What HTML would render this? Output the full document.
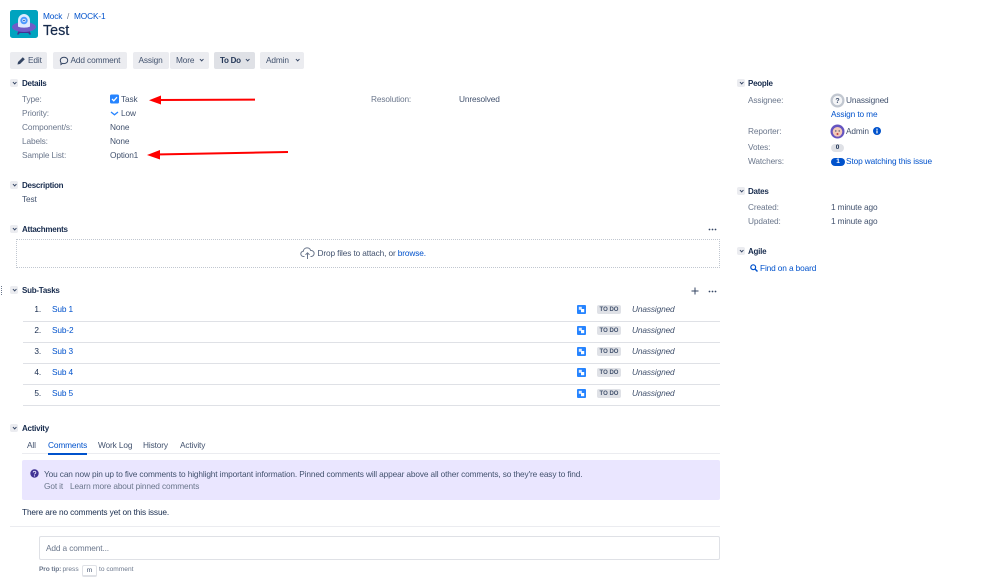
<!DOCTYPE html>
<html><head><meta charset="utf-8">
<style>
html,body{margin:0;padding:0;background:#fff;}
body{width:999px;height:587px;position:relative;overflow:hidden;font-family:"Liberation Sans",sans-serif;font-size:8.3px;letter-spacing:-.127px;color:#42526e;filter:blur(.25px);}
.t{position:absolute;line-height:14px;height:14px;white-space:nowrap;}
.l{color:#6b778c;}
.a{color:#0052cc;}
.h{color:#172b4d;font-weight:bold;font-size:8px;letter-spacing:-.25px;margin-top:1px;}
.v{color:#172b4d;}
.b{position:absolute;top:52px;height:17px;line-height:17px;background:#ebecf0;border-radius:2px;color:#42526e;white-space:nowrap;box-sizing:border-box;}
.c{position:absolute;width:8px;height:8px;background:#ebecf0;border-radius:2px;}
.c:after,.dn:after{content:"";position:absolute;left:2.6px;top:1.5px;width:2.4px;height:2.4px;border-right:1.1px solid #344563;border-bottom:1.1px solid #344563;transform:rotate(45deg);}
.dn{position:absolute;width:8px;height:8px;top:4px;}
.r{position:absolute;left:23px;width:697px;height:1px;background:#dfe1e6;}
.n{position:absolute;width:10px;text-align:right;left:31px;line-height:14px;color:#172b4d;}
.z{position:absolute;left:597px;width:24px;height:9px;background:#dfe1e6;border-radius:2px;color:#42526e;font-size:6px;letter-spacing:0;font-weight:bold;line-height:10px;text-align:center;}
.i{position:absolute;left:632px;line-height:14px;font-style:italic;color:#42526e;white-space:nowrap;}
svg{position:absolute;}
.p{font-size:6.6px;letter-spacing:0;}
</style></head><body>

<svg style="left:10px;top:10px" width="28" height="28" viewBox="0 0 28 28">
<rect width="28" height="28" rx="2.500" fill="#00a3bf"/>
<rect x="8" y="21" width="12" height="2" fill="#403294"/>
<path d="M8.500 20.500l-1.500 4h2l1.500-4zM19.500 20.500l1.500 4h-2l-1.500-4z" fill="#403294"/>
<ellipse cx="14" cy="17" rx="12" ry="5" fill="#6f5cc8"/>
<path d="M8 16.500V10.500a6 6.500 0 0 1 12 0v6c-2 1.500-10 1.500-12 0z" fill="#deebff"/>
<circle cx="14" cy="10.500" r="3.700" fill="#4c9aff"/><circle cx="14" cy="10.500" r="1.700" fill="#deebff"/><circle cx="14" cy="10.500" r=".8" fill="#0747a6"/>
</svg>
<span class="t a" style="left:43px;top:9px">Mock</span>
<span class="t l" style="left:67px;top:9px">/</span>
<span class="t a" style="left:74px;top:9px">MOCK-1</span>
<span class="t" style="left:43px;top:21px;font-size:14.3px;letter-spacing:0;line-height:20px;height:20px;color:#172b4d;-webkit-text-stroke:.2px #172b4d">Test</span>

<div class="b" style="left:10px;width:37px;padding-left:18px">Edit</div>
<svg style="left:17px;top:56px" width="9" height="9" viewBox="0 0 9 9"><path d="M.5 8.500l.5-2.500L5.800 1.200l2 2L3 8z" fill="#344563"/></svg>
<div class="b" style="left:53px;width:74px;padding-left:17.500px">Add comment</div>
<svg style="left:59px;top:55.500px" width="10" height="10" viewBox="0 0 10 10"><path d="M5 1.200c2.200 0 3.700 1.400 3.700 3.200S7.200 7.600 5 7.600c-.6 0-1 0-1.500-.2L2 8.500V6.600C1.500 6 1.300 5.200 1.300 4.400 1.300 2.600 2.800 1.200 5 1.200z" fill="none" stroke="#344563" stroke-width="1"/></svg>
<div class="b" style="left:133px;width:36px;padding-left:5.500px">Assign</div>
<div class="b" style="left:170px;width:39px;padding-left:6px">More<span class="dn" style="left:27px"></span></div>
<div class="b" style="left:214px;width:41px;background:#dfe1e6;color:#253858;font-weight:bold;font-size:8px;letter-spacing:-.25px;padding-left:6px">To Do<span class="dn" style="left:29.500px"></span></div>
<div class="b" style="left:260px;width:44px;padding-left:6px">Admin<span class="dn" style="left:33px"></span></div>

<div class="c" style="left:10px;top:79px"></div><span class="t h" style="left:22px;top:76px">Details</span>
<span class="t l" style="left:22px;top:92px">Type:</span>
<span class="t l" style="left:22px;top:106px">Priority:</span>
<span class="t l" style="left:22px;top:120px">Component/s:</span>
<span class="t l" style="left:22px;top:134px">Labels:</span>
<span class="t l" style="left:22px;top:148px">Sample List:</span>
<svg style="left:110px;top:94px" width="9" height="10" viewBox="0 0 9 10"><rect y=".5" width="9" height="9" rx="1.500" fill="#2684ff"/><path d="M2 5l1.800 1.800L7 3.200" fill="none" stroke="#fff" stroke-width="1.300"/></svg>
<span class="t" style="left:121px;top:92px">Task</span>
<svg style="left:110px;top:110px" width="9" height="7" viewBox="0 0 9 7"><path d="M1 2l3.500 2.800L8 2" fill="none" stroke="#2684ff" stroke-width="1.300"/></svg>
<span class="t" style="left:121px;top:106px">Low</span>
<span class="t" style="left:110px;top:120px">None</span>
<span class="t" style="left:110px;top:134px">None</span>
<span class="t" style="left:110px;top:148px">Option1</span>
<span class="t l" style="left:371px;top:92px">Resolution:</span>
<span class="t" style="left:459px;top:92px">Unresolved</span>

<svg style="left:140px;top:90px" width="155" height="72" viewBox="0 0 155 72">
<path d="M16 10L115 9.600" stroke="#f00" stroke-width="2" fill="none"/><path d="M9 10.300L21 5.500V14.500z" fill="#f00"/>
<path d="M15 64.500L148 62" stroke="#f00" stroke-width="2" fill="none"/><path d="M7 65L20 60V69.500z" fill="#f00"/>
</svg>

<div class="c" style="left:10px;top:181px"></div><span class="t h" style="left:22px;top:178px">Description</span>
<span class="t" style="left:22px;top:192px">Test</span>

<div class="c" style="left:10px;top:225px"></div><span class="t h" style="left:22px;top:222px">Attachments</span>
<svg style="left:708px;top:228px" width="9" height="3" viewBox="0 0 9 3"><circle cx="1.500" cy="1.500" r=".9" fill="#344563"/><circle cx="4.500" cy="1.500" r=".9" fill="#344563"/><circle cx="7.500" cy="1.500" r=".9" fill="#344563"/></svg>
<div style="position:absolute;left:16px;top:239px;width:702px;height:27px;border:1px dotted #c1c7d0"></div>
<svg style="left:300px;top:246px" width="15" height="14" viewBox="0 0 15 14"><path d="M4.500 10.500H3.500A2.600 2.600 0 0 1 3.300 5.300 3.800 3.800 0 0 1 10.700 4.500 3 3 0 0 1 11.500 10.500H10.500M7.500 13V7M5.500 8.800L7.500 6.800 9.500 8.800" fill="none" stroke="#6b778c" stroke-width="1"/></svg>
<span class="t" style="left:317.500px;top:246px">Drop files to attach, or <span class="a">browse.</span></span>

<svg style="left:1px;top:286px" width="2" height="9" viewBox="0 0 2 9"><path d="M.5 0V9" stroke="#6b778c" stroke-dasharray="1 1"/></svg>
<div class="c" style="left:10px;top:286px"></div><span class="t h" style="left:22px;top:283px">Sub-Tasks</span>
<svg style="left:691px;top:287px" width="8" height="8" viewBox="0 0 8 8"><path d="M4 .5V7.500M.5 4H7.500" stroke="#344563" stroke-width="1"/></svg>
<svg style="left:708px;top:290px" width="9" height="3" viewBox="0 0 9 3"><circle cx="1.500" cy="1.500" r=".9" fill="#344563"/><circle cx="4.500" cy="1.500" r=".9" fill="#344563"/><circle cx="7.500" cy="1.500" r=".9" fill="#344563"/></svg>

<div class="n" style="top:302px">1.</div><span class="t a" style="left:52px;top:302px">Sub 1</span>
<svg style="left:577px;top:305px" width="9" height="9" viewBox="0 0 9 9"><rect width="9" height="9" rx="1" fill="#2684ff"/><rect x="1.800" y="1.800" width="3" height="3" fill="#deebff"/><rect x="4" y="4" width="3.200" height="3.200" fill="#fff"/></svg>
<div class="z" style="top:305px">TO DO</div><div class="i" style="top:302px">Unassigned</div>
<div class="r" style="top:321px"></div>

<div class="n" style="top:323px">2.</div><span class="t a" style="left:52px;top:323px">Sub-2</span>
<svg style="left:577px;top:326px" width="9" height="9" viewBox="0 0 9 9"><rect width="9" height="9" rx="1" fill="#2684ff"/><rect x="1.800" y="1.800" width="3" height="3" fill="#deebff"/><rect x="4" y="4" width="3.200" height="3.200" fill="#fff"/></svg>
<div class="z" style="top:326px">TO DO</div><div class="i" style="top:323px">Unassigned</div>
<div class="r" style="top:342px"></div>

<div class="n" style="top:344px">3.</div><span class="t a" style="left:52px;top:344px">Sub 3</span>
<svg style="left:577px;top:347px" width="9" height="9" viewBox="0 0 9 9"><rect width="9" height="9" rx="1" fill="#2684ff"/><rect x="1.800" y="1.800" width="3" height="3" fill="#deebff"/><rect x="4" y="4" width="3.200" height="3.200" fill="#fff"/></svg>
<div class="z" style="top:347px">TO DO</div><div class="i" style="top:344px">Unassigned</div>
<div class="r" style="top:363px"></div>

<div class="n" style="top:365px">4.</div><span class="t a" style="left:52px;top:365px">Sub 4</span>
<svg style="left:577px;top:368px" width="9" height="9" viewBox="0 0 9 9"><rect width="9" height="9" rx="1" fill="#2684ff"/><rect x="1.800" y="1.800" width="3" height="3" fill="#deebff"/><rect x="4" y="4" width="3.200" height="3.200" fill="#fff"/></svg>
<div class="z" style="top:368px">TO DO</div><div class="i" style="top:365px">Unassigned</div>
<div class="r" style="top:384px"></div>

<div class="n" style="top:386px">5.</div><span class="t a" style="left:52px;top:386px">Sub 5</span>
<svg style="left:577px;top:389px" width="9" height="9" viewBox="0 0 9 9"><rect width="9" height="9" rx="1" fill="#2684ff"/><rect x="1.800" y="1.800" width="3" height="3" fill="#deebff"/><rect x="4" y="4" width="3.200" height="3.200" fill="#fff"/></svg>
<div class="z" style="top:389px">TO DO</div><div class="i" style="top:386px">Unassigned</div>
<div class="r" style="top:405px"></div>

<div class="c" style="left:10px;top:424px"></div><span class="t h" style="left:22px;top:421px">Activity</span>
<span class="t" style="left:27px;top:438px">All</span>
<span class="t a" style="left:48px;top:438px">Comments</span>
<span class="t" style="left:98px;top:438px">Work Log</span>
<span class="t" style="left:143px;top:438px">History</span>
<span class="t" style="left:180px;top:438px">Activity</span>
<div style="position:absolute;left:22px;top:453px;width:698px;height:1px;background:#ebecf0"></div>
<div style="position:absolute;left:48px;top:453px;width:39px;height:1.500px;background:#0052cc"></div>

<div style="position:absolute;left:22px;top:460px;width:698px;height:40px;background:#eae6ff;border-radius:2px"></div>
<svg style="left:30px;top:469px" width="9" height="9" viewBox="0 0 9 9"><circle cx="4.500" cy="4.500" r="4.200" fill="#403294"/><path d="M3.200 3.500a1.300 1.200 0 1 1 1.900 1.100c-.4.200-.6.400-.6.900" fill="none" stroke="#eae6ff" stroke-width=".9"/><circle cx="4.500" cy="6.900" r=".6" fill="#eae6ff"/></svg>
<span class="t" style="left:44px;top:467px">You can now pin up to five comments to highlight important information. Pinned comments will appear above all other comments, so they're easy to find.</span>
<span class="t l" style="left:44px;top:479px">Got it</span>
<span class="t l" style="left:70px;top:479px">Learn more about pinned comments</span>

<span class="t v" style="left:22px;top:505px">There are no comments yet on this issue.</span>
<div style="position:absolute;left:10px;top:526px;width:710px;height:1px;background:#ebecf0"></div>
<div style="position:absolute;left:39px;top:536px;width:679px;height:22px;border:1px solid #dfe1e6;border-radius:2px"></div>
<span class="t l" style="left:46px;top:541px">Add a comment...</span>
<span class="t l p" style="left:39px;top:563px;font-weight:bold;letter-spacing:-.1px">Pro tip:</span>
<span class="t l p" style="left:62.500px;top:563px">press</span>
<div class="p" style="position:absolute;left:82px;top:565px;width:13px;height:9px;border:1px solid #dfe1e6;border-bottom-width:2px;border-radius:2px;text-align:center;line-height:9px;color:#42526e">m</div>
<span class="t l p" style="left:99px;top:563px">to comment</span>

<div class="c" style="left:737px;top:79px"></div><span class="t h" style="left:748px;top:76px">People</span>
<span class="t l" style="left:748px;top:93px">Assignee:</span>
<svg style="left:830px;top:93px" width="15" height="15" viewBox="0 0 15 15"><circle cx="7.500" cy="7.500" r="7" fill="#c1c7d0"/><circle cx="7.500" cy="7.500" r="4.800" fill="#f4f5f7"/><text x="7.500" y="10" font-size="7" font-weight="bold" text-anchor="middle" fill="#42526e" font-family="Liberation Sans">?</text></svg>
<span class="t" style="left:846px;top:93px">Unassigned</span>
<span class="t a" style="left:831px;top:107px">Assign to me</span>
<span class="t l" style="left:748px;top:124px">Reporter:</span>
<svg style="left:830px;top:124px" width="15" height="15" viewBox="0 0 15 15"><circle cx="7.500" cy="7.500" r="7" fill="#6554c0"/><circle cx="7.500" cy="7.800" r="4.800" fill="#f2c9b8"/><circle cx="5.800" cy="7" r=".7" fill="#42526e"/><circle cx="9.200" cy="7" r=".7" fill="#42526e"/><circle cx="7.500" cy="10" r="1" fill="#bf4040"/></svg>
<span class="t" style="left:846px;top:124px">Admin</span>
<svg style="left:873px;top:127px" width="8" height="8" viewBox="0 0 8 8"><circle cx="4" cy="4" r="4" fill="#0052cc"/><rect x="3.400" y="3.400" width="1.200" height="3" fill="#fff"/><circle cx="4" cy="2.200" r=".7" fill="#fff"/></svg>
<span class="t l" style="left:748px;top:140px">Votes:</span>
<div style="position:absolute;left:831px;top:144px;width:13px;height:8px;border-radius:4px;background:#dfe1e6;text-align:center;line-height:8px;font-size:6.500px;font-weight:bold;color:#172b4d">0</div>
<span class="t l" style="left:748px;top:154px">Watchers:</span>
<div style="position:absolute;left:831px;top:158px;width:14px;height:8px;border-radius:4px;background:#0052cc;text-align:center;line-height:8px;font-size:6.500px;font-weight:bold;color:#fff">1</div>
<span class="t a" style="left:846px;top:154px">Stop watching this issue</span>

<div class="c" style="left:737px;top:187px"></div><span class="t h" style="left:748px;top:184px">Dates</span>
<span class="t l" style="left:748px;top:200px">Created:</span>
<span class="t" style="left:831px;top:200px">1 minute ago</span>
<span class="t l" style="left:748px;top:214px">Updated:</span>
<span class="t" style="left:831px;top:214px">1 minute ago</span>

<div class="c" style="left:737px;top:247px"></div><span class="t h" style="left:748px;top:244px">Agile</span>
<svg style="left:750px;top:263.500px" width="8" height="8" viewBox="0 0 8 8"><circle cx="3.200" cy="3.200" r="2.400" fill="none" stroke="#0052cc" stroke-width="1.200"/><path d="M5 5L7.500 7.500" stroke="#0052cc" stroke-width="1.400"/></svg>
<span class="t a" style="left:760px;top:260.500px">Find on a board</span>

</body></html>
